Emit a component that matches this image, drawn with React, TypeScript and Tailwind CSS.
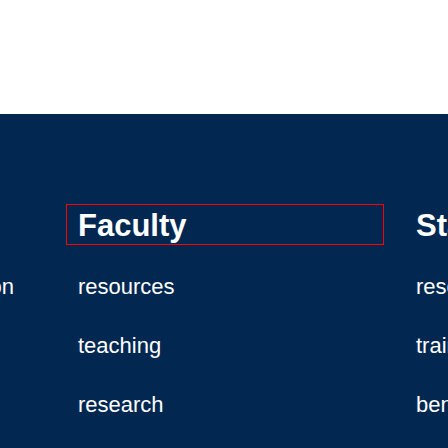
const columns = [
  {
    title: 'Alumni',
    links: ['graduate student orientation', 'events', 'giving'],
  },
  {
    title: 'Faculty',
    links: ['resources', 'teaching', 'research'],
    focused: true,
  },
  {
    title: 'Staff',
    links: ['resources', 'training', 'benefits'],
  },
];

export default function App() {
  return (
    <div
      className="h-screen flex flex-col bg-white"
      style={{ fontFamily: '"Liberation Sans", Arial, sans-serif' }}
    >
      <div className="h-[114px] shrink-0 bg-white" />
      <div className="flex-1 overflow-hidden bg-[#022851] text-white">
        <div className="flex gap-[20px] ml-[-272px] pt-[90px]">
          {columns.map((col) => (
            <div key={col.title} className="w-[318px] shrink-0">
              <div
                className={`border px-[11px] pt-[5px] pb-[3px] ${
                  col.focused ? 'border-[#ff0000]' : 'border-transparent'
                }`}
              >
                <h2 className="text-[31px] leading-[31px] font-bold whitespace-nowrap">
                  {col.title}
                </h2>
              </div>
              <ul className="pl-3 pt-[28px] flex flex-col gap-[31px]">
                {col.links.map((link) => (
                  <li key={link} className="text-[22px] leading-[28px] whitespace-nowrap">
                    {link}
                  </li>
                ))}
              </ul>
            </div>
          ))}
        </div>
      </div>
    </div>
  );
}
